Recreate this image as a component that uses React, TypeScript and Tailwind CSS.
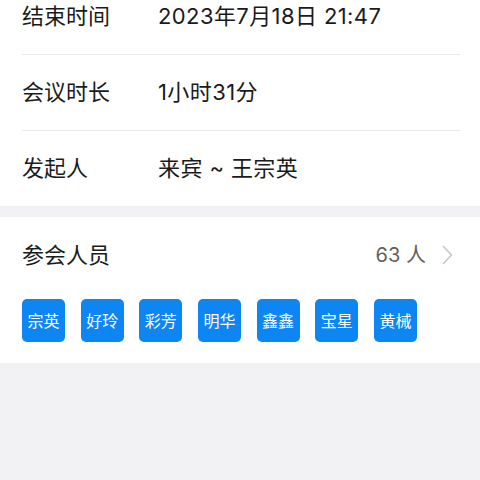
import React from "react";

const font = { fontFamily: '"Inter", "Noto Sans CJK SC", sans-serif' };

function Row({ label, value, divider }: { label: string; value: string; divider?: boolean }) {
  return (
    <div className="flex flex-col">
      <div className="flex h-[75px] items-center text-[22px] text-[#1b1b1b]">
        <span className="w-[136px]">{label}</span>
        <span className="tracking-[0.4px]">{value}</span>
      </div>
      {divider && <div className="h-px bg-[#e9e9eb] mr-[20px]" />}
    </div>
  );
}

export default function App() {
  const tags = ["宗英", "好玲", "彩芳", "明华", "鑫鑫", "宝星", "黄械"];
  return (
    <div className="w-[480px] h-[480px] bg-[#f2f2f4] overflow-hidden" style={font}>
      <div className="-mt-[21px] bg-white pl-[22px]">
        <Row label="结束时间" value="2023年7月18日 21:47" divider />
        <Row label="会议时长" value="1小时31分" divider />
        <Row label="发起人" value="来宾 ~ 王宗英" />
      </div>
      <div className="mt-[11px] bg-white px-[22px] pb-[21px]">
        <div className="flex h-[76px] items-center justify-between">
          <span className="text-[22px] text-[#1b1b1b]">参会人员</span>
          <div className="flex items-center gap-[16px] pr-[5px]">
            <span className="text-[20px] text-[#5f5f63]">63 人</span>
            <svg width="11" height="20" viewBox="0 0 11 20" fill="none">
              <path d="M1.5 1.5 L9.5 10 L1.5 18.5" stroke="#c7c7cb" strokeWidth="1.6" strokeLinecap="round" strokeLinejoin="round" />
            </svg>
          </div>
        </div>
        <div className="mt-[6px] flex gap-[15.67px]">
          {tags.map((t) => (
            <div
              key={t}
              className="flex h-[43px] w-[43px] items-center justify-center rounded-[5px] bg-[#0d86f3] text-[16px] text-white"
            >
              {t}
            </div>
          ))}
        </div>
      </div>
    </div>
  );
}
